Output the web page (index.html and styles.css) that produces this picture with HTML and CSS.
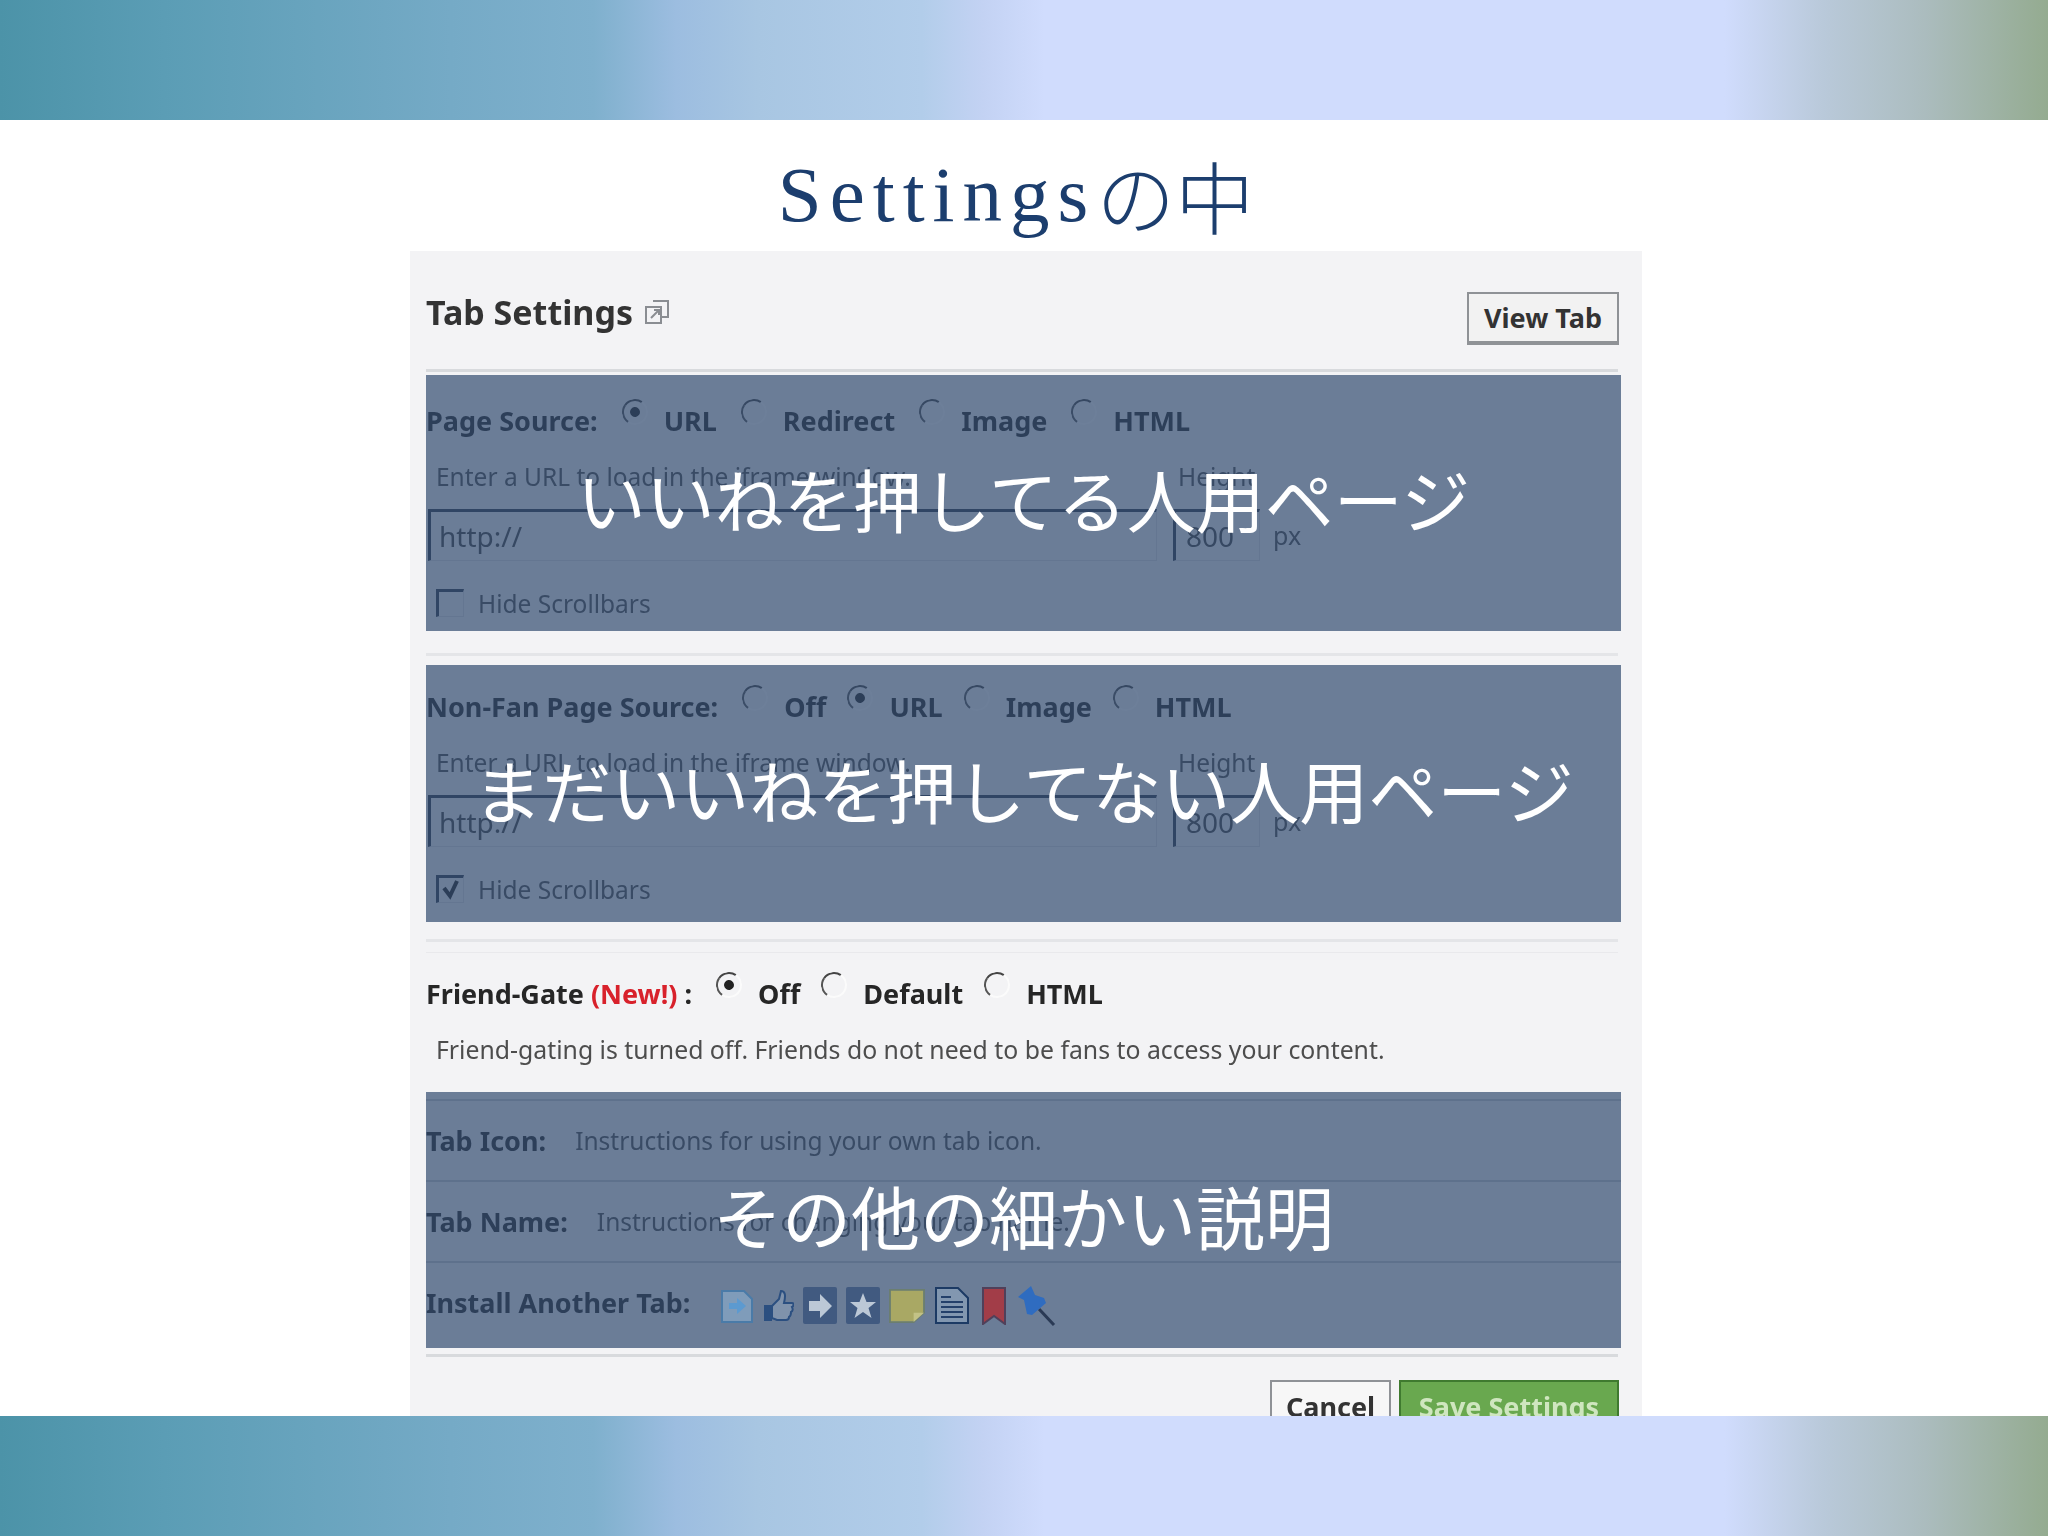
FILE: index.html
```html
<!DOCTYPE html>
<html lang="ja">
<head>
    <meta charset="UTF-8">
    <title>Settingsの中</title>
    <link rel="stylesheet" href="styles.css">
</head>
<body>
    <div class="slide">
        <div class="banner"></div>
        <h1 class="title"><span class="latin">Settings</span>の中</h1>

        <div class="card">
            <!-- Header -->
            <div class="tab-head soft">
                <div class="tab-title">
                    Tab Settings
                    <svg class="pop-icon" width="28" height="28" viewBox="0 0 28 28" fill="none" stroke="#8a8d92" stroke-width="2">
                        <path d="M10 3h15v16h-6"/>
                        <path d="M3 9h15v16H3z"/>
                        <path d="M8 20l8-8M11 12h5v5"/>
                    </svg>
                </div>
                <div class="btn view-btn">View Tab</div>
            </div>
            <div class="sep"></div>

            <!-- Page source -->
            <div class="block block-one">
                <div class="fields soft">
                    <div class="opts">
                        <span class="label">Page Source:</span>
                        <span class="radio on"></span><span class="opt">URL</span>
                        <span class="radio"></span><span class="opt">Redirect</span>
                        <span class="radio"></span><span class="opt">Image</span>
                        <span class="radio"></span><span class="opt">HTML</span>
                    </div>
                    <div class="url-grid">
                        <div class="hint">Enter a URL to load in the iframe window.</div>
                        <div class="hint-h">Height</div>
                        <div></div>
                        <div class="input url-input">http://</div>
                        <div class="input h-input">800</div>
                        <div class="px">px</div>
                    </div>
                    <div class="check-row">
                        <span class="check"></span>
                        <span class="hint">Hide Scrollbars</span>
                    </div>
                </div>
                <div class="veil">いいねを押してる人用ページ</div>
            </div>
            <div class="sep sep-a"></div>

            <!-- Non-fan page source -->
            <div class="block block-two">
                <div class="fields soft">
                    <div class="opts">
                        <span class="label">Non-Fan Page Source:</span>
                        <span class="radio"></span><span class="opt">Off</span>
                        <span class="radio on"></span><span class="opt">URL</span>
                        <span class="radio"></span><span class="opt">Image</span>
                        <span class="radio"></span><span class="opt">HTML</span>
                    </div>
                    <div class="url-grid">
                        <div class="hint">Enter a URL to load in the iframe window.</div>
                        <div class="hint-h">Height</div>
                        <div></div>
                        <div class="input url-input">http://</div>
                        <div class="input h-input">800</div>
                        <div class="px">px</div>
                    </div>
                    <div class="check-row">
                        <span class="check">
                            <svg width="24" height="24" viewBox="0 0 24 24" fill="none" stroke="#222" stroke-width="4"><path d="M5 10l6 8 7-15"/></svg>
                        </span>
                        <span class="hint">Hide Scrollbars</span>
                    </div>
                </div>
                <div class="veil">まだいいねを押してない人用ページ</div>
            </div>
            <div class="sep sep-b"></div>
            <div class="sep-thin"></div>

            <!-- Friend gate -->
            <div class="gate soft">
                <div class="opts">
                    <span class="label">Friend-Gate <span class="new">(New!)</span> :</span>
                    <span class="radio on"></span><span class="opt">Off</span>
                    <span class="radio"></span><span class="opt">Default</span>
                    <span class="radio"></span><span class="opt">HTML</span>
                </div>
                <div class="hint gate-note">Friend-gating is turned off. Friends do not need to be fans to access your content.</div>
            </div>

            <!-- Other details -->
            <div class="block block-three">
                <div class="info-row soft">
                    <span class="label">Tab Icon:</span>
                    <span class="hint">Instructions for using your own tab icon.</span>
                </div>
                <div class="info-row soft">
                    <span class="label">Tab Name:</span>
                    <span class="hint">Instructions for changing your tab name.</span>
                </div>
                <div class="info-row soft">
                    <span class="label">Install Another Tab:</span>
                </div>
                <div class="veil">その他の細かい説明</div>
                <!-- the icons keep their colour through the shade -->
                <div class="tab-icons soft">
                    <svg width="34" height="36" viewBox="0 0 34 36">
                        <path d="M2 3h22l8 8v23H2z" fill="#7f9cba" stroke="#4a7ba8" stroke-width="2"/>
                        <path d="M9 15h8v-5l9 8-9 8v-5H9z" fill="#5c9ad0"/>
                    </svg>
                    <svg width="31" height="36" viewBox="0 0 31 36">
                        <path d="M1 17h8v16H1z" fill="#2b4f80"/>
                        <path d="M9 18l7-7 2-8c4 0 5 4 3 12h8c2 0 2 3 0 4 1 2 1 4-1 5 0 2 0 4-2 5 0 2-1 3-3 3H14l-5-2z" fill="#7f92ab" stroke="#2b4f80" stroke-width="2"/>
                    </svg>
                    <svg width="34" height="38" viewBox="0 0 34 38">
                        <rect width="34" height="37" rx="2" fill="#415a80"/>
                        <path d="M6 14h11V7l12 12-12 12v-7H6z" fill="#bcc8d6"/>
                    </svg>
                    <svg width="34" height="38" viewBox="0 0 34 38">
                        <rect width="34" height="37" rx="2" fill="#415a80"/>
                        <path d="M17 6l3.500 9H30l-7.500 6 3 10L17 25l-8.500 6 3-10L4 15h9.500z" fill="#bcc8d6"/>
                    </svg>
                    <svg width="36" height="38" viewBox="0 0 38 38">
                        <path d="M1 2h36v24L26 36H1z" fill="#a9a864" stroke="#6b7e70" stroke-width="2"/>
                        <path d="M37 26H26v10z" fill="#c3c286"/>
                    </svg>
                    <svg width="39" height="38" viewBox="0 0 39 38">
                        <path d="M2 1h22l10 10v25H2z" fill="#8297b0" stroke="#1c3a64" stroke-width="2"/>
                        <path d="M7 10h10M7 15h22M7 20h22M7 25h22M7 30h22" stroke="#24406a" stroke-width="2"/>
                    </svg>
                    <svg width="26" height="38" viewBox="0 0 26 38">
                        <path d="M1 1h22v36l-11-8-11 8z" fill="#a23d48" stroke="#50405a" stroke-width="2"/>
                    </svg>
                    <svg width="39" height="42" viewBox="0 0 39 42">
                        <path d="M22 24l15 16" stroke="#2a3a55" stroke-width="3"/>
                        <path d="M14 1L1 12l6 3 3 14 5 1 14-12-2-5-9-3z" fill="#2f6cc0"/>
                    </svg>
                </div>
            </div>
            <div class="sep sep-c"></div>

            <div class="foot soft">
                <div class="btn cancel-btn">Cancel</div>
                <div class="btn save-btn">Save Settings</div>
            </div>
        </div>

        <div class="banner"></div>
    </div>
</body>
</html>
```
FILE: styles.css
```css
body {
    margin: 0;
    background-color: #ffffff;
}

.slide {
    width: 2048px;
    height: 1536px;
    display: flex;
    flex-direction: column;
    overflow: hidden;
    font-family: "Noto Sans", "Liberation Sans", sans-serif;
}

.banner {
    height: 120px;
    flex: none;
    background: linear-gradient(90deg, #4c93a8 0%, #5b9db5 8%, #75aac6 22%, #7fb0cd 29%, #9cbde0 33%, #a8c6e2 37%, #b2cdea 45%, #c3d2f3 48%, #d0dcfd 51%, #d0dcfd 84.200%, #b9c9da 89%, #abbcbe 94%, #94ab90 100%);
}

.title {
    height: 131px;
    margin: 0;
    flex: none;
    display: flex;
    align-items: center;
    justify-content: center;
    padding: 18px 16px 0 0;
    box-sizing: border-box;
    font-family: "Liberation Serif", "Noto Sans CJK JP", serif;
    font-size: 79px;
    font-weight: 300;
    color: #1c3e6e;
}

.title .latin {
    letter-spacing: 8px;
}

/* Screenshot card */
.card {
    width: 1232px;
    flex: 1;
    min-height: 0;
    margin-left: 410px;
    padding: 0 21px 0 16px;
    box-sizing: border-box;
    overflow: hidden;
    background-color: #f3f3f5;
}

.soft {
    filter: blur(0.6px);
}

.tab-head {
    height: 118px;
    display: flex;
    justify-content: space-between;
    align-items: flex-start;
}

.tab-title {
    margin-top: 38px;
    display: flex;
    align-items: center;
    gap: 10px;
    font-size: 34px;
    font-weight: 700;
    color: #333333;
}

.btn {
    box-sizing: border-box;
    display: flex;
    align-items: center;
    justify-content: center;
    font-size: 27px;
    font-weight: 700;
    border: 2px solid #8f9296;
    color: #333333;
    background-color: #f2f2f2;
}

.view-btn {
    width: 152px;
    height: 53px;
    margin: 41px 2px 0 0;
    border-bottom-width: 4px;
}

.sep {
    height: 3px;
    margin: 0 3px 3px 0;
    background-color: #d8dadd;
}

.sep-a {
    margin: 22px 3px 9px 0;
    background-color: #e4e5e8;
}

.sep-b {
    margin: 17px 3px 10px 0;
    background-color: #e4e5e8;
}

.sep-c {
    margin: 6px 3px 0 0;
}

.sep-thin {
    height: 1px;
    margin-right: 3px;
    background-color: #e9e9ec;
}

/* Shaded blocks */
.block {
    position: relative;
}

.block-one .fields {
    padding: 30px 0 14px;
}

.block-one .opt {
    margin-right: 24px;
}

.block-two .fields {
    padding: 26px 0 19px;
}

.block-three {
    height: 256px;
    padding-top: 7px;
    box-sizing: border-box;
}

.veil {
    position: absolute;
    top: 0;
    right: 0;
    bottom: 0;
    left: 0;
    display: flex;
    align-items: center;
    justify-content: center;
    padding-bottom: 10px;
    background-color: rgba(49, 74, 111, 0.7);
    font-family: "Noto Sans CJK JP", sans-serif;
    font-size: 69px;
    font-weight: 400;
    color: #ffffff;
}

.opts {
    height: 30px;
    display: flex;
    align-items: center;
}

.label {
    font-size: 27px;
    font-weight: 700;
    color: #262626;
    white-space: nowrap;
}

.new {
    color: #d8212b;
}

.opt {
    margin: 0 21px 0 16px;
    font-size: 27px;
    font-weight: 700;
    color: #262626;
}

.label + .radio {
    margin-left: 24px;
}

.radio {
    position: relative;
    top: -8px;
    width: 26px;
    height: 26px;
    box-sizing: border-box;
    flex: none;
    border-radius: 50%;
    border: 2px solid #fbfbfb;
    border-top-color: #444444;
    border-left-color: #555555;
    transform: rotate(-10deg);
}

.radio.on::after {
    content: "";
    position: absolute;
    top: 6px;
    left: 6px;
    width: 10px;
    height: 10px;
    border-radius: 50%;
    background-color: #222222;
}

.hint {
    font-size: 24.500px;
    color: #4d4d4d;
    white-space: nowrap;
}

.url-grid {
    display: grid;
    grid-template-columns: 747px 100px auto;
    grid-template-rows: 30px 52px;
    row-gap: 18px;
    margin-top: 26px;
    align-items: center;
}

.url-grid .hint {
    padding-left: 10px;
}

.hint-h {
    padding-left: 5px;
    font-size: 24.500px;
    color: #4d4d4d;
}

.input {
    box-sizing: border-box;
    height: 52px;
    display: flex;
    align-items: center;
    border: 1px solid #dcdde0;
    border-top: 3px solid #2f3a4a;
    border-left: 3px solid #2f3a4a;
    font-size: 28px;
    color: #444444;
}

.url-input {
    width: 729px;
    margin-left: 2px;
    padding-left: 8px;
}

.h-input {
    width: 87px;
    padding-left: 10px;
}

.px {
    font-size: 25px;
    color: #4d4d4d;
}

.check-row {
    height: 28px;
    margin: 28px 0 0 10px;
    display: flex;
    align-items: center;
    gap: 14px;
}

.check {
    width: 28px;
    height: 28px;
    box-sizing: border-box;
    display: flex;
    align-items: center;
    justify-content: center;
    border: 1px solid #dcdde0;
    border-top: 3px solid #2f3a4a;
    border-left: 3px solid #2f3a4a;
}

.gate {
    padding-top: 25px;
}

.gate-note {
    height: 30px;
    line-height: 30px;
    margin: 26px 0 28px 10px;
    font-size: 24.800px;
}

/* Info rows */
.info-row {
    display: flex;
    align-items: center;
    gap: 29px;
    height: 81px;
    border-top: 2px solid #c9cbd0;
    box-sizing: border-box;
}

.info-row:last-of-type {
    height: 86px;
}

.tab-icons {
    position: absolute;
    left: 294px;
    bottom: 21px;
    display: flex;
    align-items: center;
    gap: 9px;
}

.foot {
    display: flex;
    justify-content: flex-end;
    gap: 8px;
    margin: 23px 2px 0 0;
}

.cancel-btn {
    width: 121px;
    height: 52px;
    background-color: #f7f7f7;
}

.save-btn {
    width: 220px;
    height: 52px;
    background-color: #69a84f;
    border-color: #3f7a2f;
    color: #cfe6bf;
}
```
